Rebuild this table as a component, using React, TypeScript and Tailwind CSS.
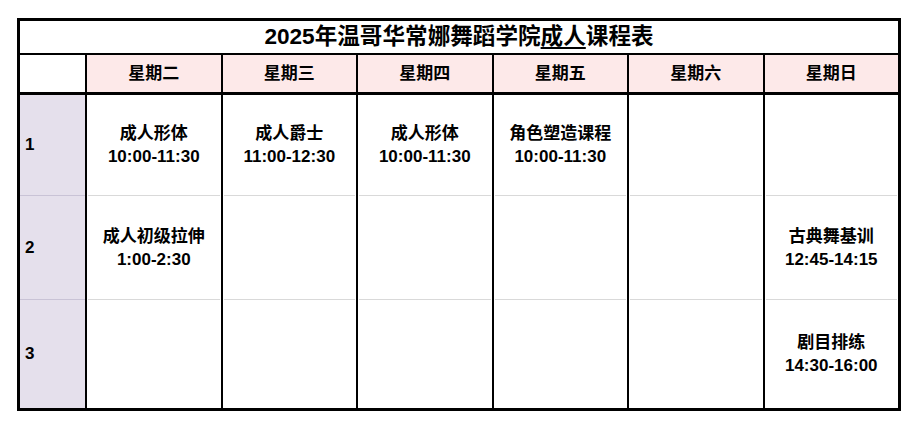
const days = ["星期二", "星期三", "星期四", "星期五", "星期六", "星期日"];

type Slot = { name: string; time: string } | null;

const rows: { label: string; h: string; cells: Slot[] }[] = [
  {
    label: "1",
    h: "h-[101px]",
    cells: [
      { name: "成人形体", time: "10:00-11:30" },
      { name: "成人爵士", time: "11:00-12:30" },
      { name: "成人形体", time: "10:00-11:30" },
      { name: "角色塑造课程", time: "10:00-11:30" },
      null,
      null,
    ],
  },
  {
    label: "2",
    h: "h-[104px]",
    cells: [
      { name: "成人初级拉伸", time: "1:00-2:30" },
      null,
      null,
      null,
      null,
      { name: "古典舞基训", time: "12:45-14:15" },
    ],
  },
  {
    label: "3",
    h: "h-[108px]",
    cells: [null, null, null, null, null, { name: "剧目排练", time: "14:30-16:00" }],
  },
];

const App = () => {
  return (
    <div
      className="bg-white w-[923px] h-[446px] pt-[18px] pl-[17px]"
      style={{ fontFamily: '"Liberation Sans", "Noto Sans CJK SC", sans-serif' }}
    >
      <div className="w-[884px] border-[3px] border-black text-black font-bold">
        {/* Title */}
        <div className="h-[34px] border-b-2 border-black flex items-center justify-center text-[22.6px] leading-none">
          2025年温哥华常娜舞蹈学院<span className="underline underline-offset-[3px] decoration-[1.5px]">成人</span>课程表
        </div>

        {/* Day header */}
        <div className="grid grid-cols-[65px_repeat(6,1fr)] h-[40px] border-b-[3px] border-black">
          <div className="bg-white"></div>
          {days.map((d) => (
            <div
              key={d}
              className="bg-[#fde9e9] border-l-2 border-black flex items-center justify-center text-[17px]"
            >
              {d}
            </div>
          ))}
        </div>

        {/* Body rows */}
        {rows.map((r, i) => (
          <div
            key={r.label}
            className={`grid grid-cols-[65px_repeat(6,1fr)] ${r.h}`}
          >
            <div
              className={`bg-[#e5e0ec] flex items-center pl-[5px] text-[17px] ${
                i < rows.length - 1 ? "border-b border-[#c9c3d6]" : ""
              }`}
            >
              {r.label}
            </div>
            {r.cells.map((c, j) => (
              <div key={j} className="border-l-2 border-black px-px">
                <div
                  className={`h-full flex flex-col items-center justify-center text-[17px] leading-[23px] ${
                    i < rows.length - 1 ? "border-b border-[#d9d9d9]" : ""
                  }`}
                >
                  {c && (
                    <>
                      <span>{c.name}</span>
                      <span>{c.time}</span>
                    </>
                  )}
                </div>
              </div>
            ))}
          </div>
        ))}
      </div>
    </div>
  );
};

export default App;
